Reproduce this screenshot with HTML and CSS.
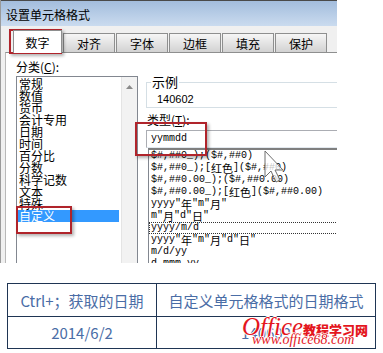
FILE: index.html
```html
<!DOCTYPE html>
<html lang="zh-CN">

<head>
    <meta charset="UTF-8">
    <title>设置单元格格式</title>
    <link rel="stylesheet" href="styles.css">
</head>

<body>
    <!-- Dialog screenshot -->
    <div class="dialog">
        <div class="titlebar">设置单元格格式</div>
        <div class="tabs">
            <div class="tab active">数字</div>
            <div class="tab">对齐</div>
            <div class="tab">字体</div>
            <div class="tab">边框</div>
            <div class="tab">填充</div>
            <div class="tab">保护</div>
        </div>
        <div class="panel">
            <div class="left">
                <div class="label">分类(<u>C</u>):</div>
                <div class="catlist">
                    <ul>
                        <li>常规</li>
                        <li>数值</li>
                        <li>货币</li>
                        <li>会计专用</li>
                        <li>日期</li>
                        <li>时间</li>
                        <li>百分比</li>
                        <li>分数</li>
                        <li>科学记数</li>
                        <li>文本</li>
                        <li>特殊</li>
                        <li class="sel">自定义</li>
                    </ul>
                    <div class="scroll">
                        <svg width="7" height="4" viewBox="0 0 7 4"><path d="M0 4 L3.5 0 L7 4 Z" fill="#8a8a8a"/></svg>
                    </div>
                </div>
            </div>
            <div class="right">
                <fieldset class="sample">
                    <legend>示例</legend>
                    <div class="sample_val">140602</div>
                </fieldset>
                <div class="label type_label">类型(<u>T</u>):</div>
                <div class="typebox">yymmdd</div>
                <ul class="fmtlist">
                    <li>$#,##0_);($#,##0)</li>
                    <li>$#,##0_);[<span class="cj">红色</span>]($#,##0)</li>
                    <li>$#,##0.00_);($#,##0.00)</li>
                    <li>$#,##0.00_);[<span class="cj">红色</span>]($#,##0.00)</li>
                    <li>yyyy"<span class="cj">年</span>"m"<span class="cj">月</span>"</li>
                    <li>m"<span class="cj">月</span>"d"<span class="cj">日</span>"</li>
                    <li class="focus">yyyy/m/d</li>
                    <li>yyyy"<span class="cj">年</span>"m"<span class="cj">月</span>"d"<span class="cj">日</span>"</li>
                    <li>m/d/yy</li>
                    <li>d-mmm-yy</li>
                </ul>
            </div>
        </div>
    </div>

    <!-- red annotation boxes -->
    <div class="mark mark_tab"></div>
    <div class="mark mark_type"></div>
    <div class="mark mark_cat"></div>

    <!-- mouse pointer -->
    <svg class="pointer" width="28" height="34" viewBox="0 0 28 34">
        <path d="M1 1 L1 27 L7 21 L12 32 L16 30 L11 20 L19 20 Z" fill="rgba(255,255,255,0.75)" stroke="#6e6e6e" stroke-width="1"/>
    </svg>

    <table class="info">
        <tr class="head">
            <td class="c1">Ctrl+；获取的日期</td>
            <td>自定义单元格格式的日期格式</td>
        </tr>
        <tr class="body_row">
            <td class="c1">2014/6/2</td>
            <td>140602</td>
        </tr>
    </table>

    <!-- site watermark -->
    <div class="wm">
        <div class="wm1">Office<span class="wm_cn">教程学习网</span></div>
        <div class="wm2">www.office68.com</div>
    </div>
</body>

</html>
```

FILE: styles.css
```css
* {
    box-sizing: border-box;
}

body {
    margin: 0;
    width: 383px;
    height: 353px;
    overflow: hidden;
    position: relative;
    background-color: #fff;
    font-family: "Noto Sans CJK SC", sans-serif;
    font-size: 12px;
    color: #000;
}

.dialog {
    width: 337px;
    height: 263px;
    overflow: hidden;
    background-color: #f0f0f0;
    border-left: 1px solid #9a9a9a;
}

.titlebar {
    height: 26px;
    padding: 2px 0 0 5px;
    line-height: 24px;
    border-top: 1px solid #4a4a4a;
    background: linear-gradient(#a3bddd, #cadbef);
}

/* tab strip */
.tabs {
    display: flex;
    align-items: flex-start;
    gap: 1px;
    height: 26px;
    padding: 4px 0 0 12px;
}

.tab {
    width: 52px;
    height: 19px;
    margin-top: 3px;
    border: 1px solid #8e8f8f;
    border-bottom: 0;
    background: linear-gradient(#f6f6f6, #d2d2d2);
    text-align: center;
    line-height: 20px;
}

.tab.active {
    width: 49px;
    height: 23px;
    margin-top: 0;
    background: #fff;
    line-height: 24px;
    position: relative;
    z-index: 1;
}

.panel {
    display: flex;
    gap: 8px;
    height: 215px;
    margin-left: 4px;
    padding: 7px 0 0 10px;
    background-color: #fff;
    border-top: 1px solid #8e8f8f;
    border-left: 1px solid #b8b8b8;
}

.left {
    width: 122px;
    flex-shrink: 0;
}

.label {
    height: 14px;
    line-height: 14px;
}

.catlist {
    display: flex;
    height: 200px;
    margin-top: 2px;
    border: 1px solid #828790;
}

.catlist ul {
    flex: 1;
    margin: 0 2px 0 0;
    padding: 1px 0 0;
    list-style: none;
}

.catlist li {
    height: 12px;
    line-height: 12px;
    padding-left: 2px;
    white-space: nowrap;
}

.catlist li.sel {
    background-color: #3399ff;
    color: #fff;
}

.scroll {
    width: 16px;
    padding: 8px 0 0 4px;
    background-color: #f2f2f2;
    border-left: 1px solid #e4e4e4;
}

.scroll svg {
    display: block;
}

.right {
    width: 200px;
    flex-shrink: 0;
    padding-top: 15px;
}

.sample {
    margin: 0;
    min-width: 0;
    padding: 4px 0 1px 10px;
    border: 1px solid #d5dfe5;
    border-right: 0;
}

.sample legend {
    margin-left: -6px;
    padding: 0 1px;
    font-size: 13px;
    line-height: 14px;
}

.sample_val {
    font-family: "Liberation Sans", sans-serif;
    font-size: 11px;
    line-height: 13px;
}

.type_label {
    margin-top: 5px;
    padding-left: 1px;
}

.typebox {
    height: 18px;
    margin-top: 3px;
    padding-left: 4px;
    border: 1px solid #abadb3;
    border-bottom-color: #e3e9ef;
    font-family: "Liberation Mono", monospace;
    font-size: 10px;
    line-height: 16px;
}

.fmtlist {
    margin: 0 0 0 2px;
    padding: 0;
    list-style: none;
    border-top: 2px solid #7f7f7f;
    border-left: 1px solid #828790;
    font-family: "Liberation Mono", "Noto Sans CJK SC", monospace;
    font-size: 10px;
}

.fmtlist li {
    height: 12px;
    line-height: 12px;
    padding-left: 2px;
    white-space: nowrap;
}

.fmtlist li.focus {
    outline: 1px dotted #333;
    outline-offset: -1px;
}

.cj {
    display: inline-block;
    height: 12px;
    vertical-align: top;
    font-family: "Noto Sans CJK SC", sans-serif;
    font-size: 11px;
    line-height: 12px;
}

/* red boxes drawn over the screenshot */
.mark {
    position: absolute;
    border: 2px solid #b0242b;
    box-shadow: 2px 2px 3px rgba(0, 0, 0, 0.3);
}

.mark_tab {
    left: 9px;
    top: 29px;
    width: 53px;
    height: 25px;
}

.mark_type {
    left: 135px;
    top: 122px;
    width: 72px;
    height: 34px;
}

.mark_cat {
    left: 16px;
    top: 206px;
    width: 56px;
    height: 28px;
}

.pointer {
    position: absolute;
    left: 264px;
    top: 150px;
}

/* table under the picture */
.info {
    width: 369px;
    margin: 20px 0 0 7px;
    border-collapse: collapse;
    color: #4a6da6;
    font-size: 15px;
}

.info td {
    padding: 0;
    border: 1px solid #1f3553;
    text-align: center;
}

.info .c1 {
    width: 149px;
}

.info .head td {
    height: 33px;
}

.info .body_row td {
    height: 32px;
}

.wm {
    position: absolute;
    left: 242px;
    top: 314px;
    color: #e4161d;
    line-height: 1;
    text-shadow: 1px 0 0 #fff, -1px 0 0 #fff, 0 1px 0 #fff, 0 -1px 0 #fff;
}

.wm1 {
    font-family: "Liberation Serif", serif;
    font-style: italic;
    font-size: 25px;
}

.wm_cn {
    font-family: "Noto Sans CJK SC", sans-serif;
    font-style: normal;
    font-weight: 900;
    font-size: 13px;
}

.wm2 {
    margin: -6px 0 0 10px;
    font-family: "Liberation Serif", serif;
    font-style: italic;
    font-size: 14px;
}
```
